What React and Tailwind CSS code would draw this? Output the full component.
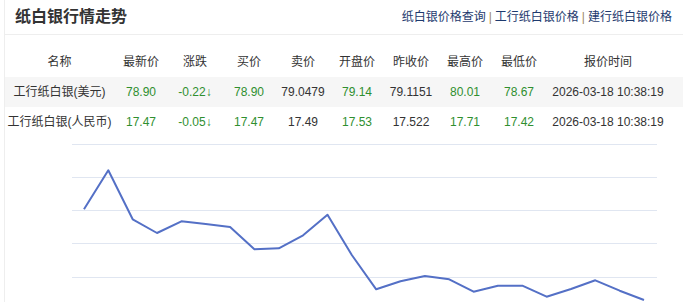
import React from 'react';

const cols = ['名称', '最新价', '涨跌', '买价', '卖价', '开盘价', '昨收价', '最高价', '最低价', '报价时间'];

const rows = [
  {
    name: '工行纸白银(美元)',
    latest: '78.90', change: '-0.22↓', buy: '78.90', sell: '79.0479',
    open: '79.14', prevClose: '79.1151', high: '80.01', low: '78.67',
    time: '2026-03-18 10:38:19',
  },
  {
    name: '工行纸白银(人民币)',
    latest: '17.47', change: '-0.05↓', buy: '17.47', sell: '17.49',
    open: '17.53', prevClose: '17.522', high: '17.71', low: '17.42',
    time: '2026-03-18 10:38:19',
  },
];

// y positions of the trend line, one point per ~24px
const points = [
  209.3, 170.3, 219.3, 233, 221.3, 224, 227, 249.3, 248.3, 235.3, 214.7, 255,
  289.3, 281.3, 276, 279.3, 291.7, 285.7, 285.7, 296.7, 289, 280.3, 290.7, 300,
];

const gridLines = [144, 177, 210, 243, 277];

const Trend = () => {
  const step = (644 - 84) / (points.length - 1);
  const d = points.map((y, i) => `${i === 0 ? 'M' : 'L'}${(84 + i * step).toFixed(1)} ${y}`).join(' ');
  return (
    <svg width="678" height="164" viewBox="5 138 678 164" className="block">
      {gridLines.map((y) => (
        <line key={y} x1="72" x2="657" y1={y + 0.5} y2={y + 0.5} stroke="#e0e6f1" strokeWidth="1" />
      ))}
      <path d={d} fill="none" stroke="#5470c6" strokeWidth="2" strokeLinejoin="round" />
    </svg>
  );
};

const Cell = ({ children, green }) => (
  <div className={`text-center whitespace-nowrap ${green ? 'text-[#2f8f2f]' : 'text-[#333]'}`}>{children}</div>
);

export default function App() {
  return (
    <div
      className="w-[683px] h-[302px] overflow-hidden bg-white"
      style={{ fontFamily: '"Liberation Sans", Arial, "Noto Sans CJK SC", sans-serif' }}
    >
      <div className="ml-[4px] border-l border-[#eeeeee] h-full">
        {/* Header */}
        <div className="h-[35px] border-b border-[#eeeeee] flex items-center justify-between pl-[10px] pr-[11px]">
          <h1 className="text-[16px] font-bold text-[#333]">纸白银行情走势</h1>
          <div className="text-[12px] text-[#1e3a6e] flex items-center">
            <a>纸白银价格查询</a>
            <span className="text-[#9a8a6a] mx-[3px]">|</span>
            <a>工行纸白银价格</a>
            <span className="text-[#9a8a6a] mx-[3px]">|</span>
            <a>建行纸白银价格</a>
          </div>
        </div>

        {/* Table */}
        <div className="mt-[12px] text-[12px] pr-[13px]">
          <div className="grid grid-cols-[109px_repeat(8,54px)_1fr] items-center h-[30px]">
            {cols.map((c) => (
              <Cell key={c}>{c}</Cell>
            ))}
          </div>
          {rows.map((r, i) => (
            <div
              key={r.name}
              className={`grid grid-cols-[109px_repeat(8,54px)_1fr] items-center h-[30px] -mr-[13px] pr-[13px] ${
                i === 0 ? 'bg-[#f6f6f6]' : 'bg-white'
              }`}
            >
              <Cell>{r.name}</Cell>
              <Cell green>{r.latest}</Cell>
              <Cell green>{r.change}</Cell>
              <Cell green>{r.buy}</Cell>
              <Cell>{r.sell}</Cell>
              <Cell green>{r.open}</Cell>
              <Cell>{r.prevClose}</Cell>
              <Cell green>{r.high}</Cell>
              <Cell green>{r.low}</Cell>
              <Cell>{r.time}</Cell>
            </div>
          ))}
        </div>

        {/* Chart */}
        <div className="mt-[1px]">
          <Trend />
        </div>
      </div>
    </div>
  );
}
